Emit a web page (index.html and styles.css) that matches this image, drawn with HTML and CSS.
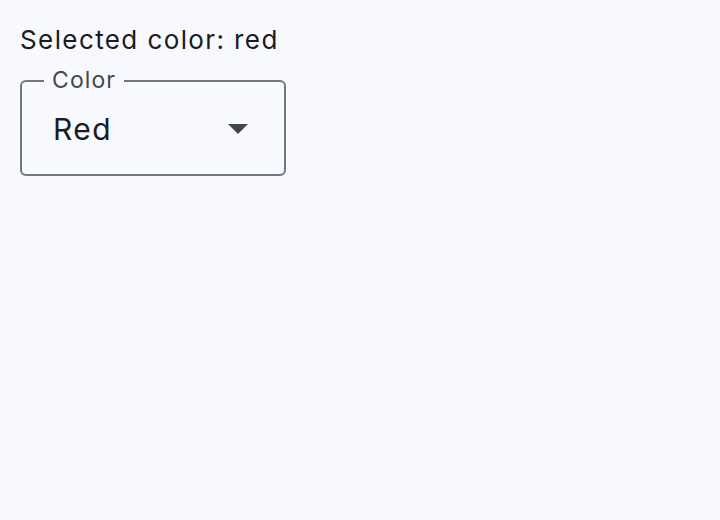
FILE: index.html
```html
<!DOCTYPE html>
<html lang="en">
<head>
    <meta charset="UTF-8">
    <meta name="viewport" content="width=device-width, initial-scale=1.0">
    <title>Color Picker</title>
    <link rel="stylesheet" href="styles.css">
</head>
<body>
    <div class="page">
        <p class="status">Selected color: red</p>

        <!-- Outlined select with a floating label -->
        <div class="select-field">
            <span class="field-label">Color</span>
            <span class="field-value">Red</span>
            <svg class="field-arrow" width="20" height="10" viewBox="0 0 20 10">
                <path d="M0 0l10 10 10-10z" fill="#44474e"/>
            </svg>
        </div>
    </div>
</body>
</html>
```

FILE: styles.css
```css
body {
    font-family: Inter, "Noto Sans", sans-serif;
    background-color: #f8f9fe;
    color: #191c20;
    margin: 0;
    padding: 0;
}
.page {
    padding: 24px 20px;
}
.status {
    margin: 0;
    font-size: 26px;
    line-height: 31px;
    letter-spacing: 1.4px;
}
.select-field {
    position: relative;
    display: flex;
    align-items: center;
    justify-content: space-between;
    width: 266px;
    height: 96px;
    margin-top: 25px;
    padding: 2px 36px 0 31px;
    border: 2px solid #74777f;
    border-radius: 6px;
    box-sizing: border-box;
}
.field-label {
    position: absolute;
    top: -16px;
    left: 22px;
    padding: 0 8px;
    font-size: 23px;
    letter-spacing: 1.1px;
    color: #44474e;
    background-color: #f8f9fe;
}
.field-value {
    font-size: 30px;
    letter-spacing: 1.5px;
}
.field-arrow {
    display: block;
}
```
